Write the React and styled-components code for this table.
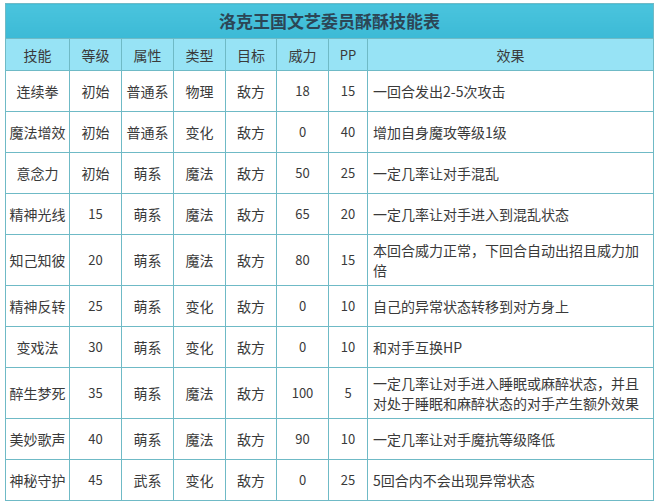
import React from 'react';
import styled, { createGlobalStyle } from 'styled-components';

const GlobalStyle = createGlobalStyle`
  html, body {
    margin: 0;
    padding: 0;
    background: #ffffff;
  }
  body {
    font-family: "Noto Sans CJK SC", "Noto Sans", sans-serif;
  }
`;

const Page = styled.div`
  padding: 3px 0 0 5px;
`;

const Table = styled.table`
  width: 648px;
  border-collapse: collapse;
  table-layout: fixed;
  color: #3a3a3a;
  font-size: 14px;
  line-height: 20px;
`;

const TitleCell = styled.th`
  height: 34px;
  padding: 0;
  background: linear-gradient(to bottom, #4ac4dd 0%, #3cbad6 100%);
  border: 1px solid #6fbac6;
  color: #2c4656;
  font-size: 17px;
  font-weight: 700;
  text-align: center;
`;

const HeadCell = styled.th`
  height: 31px;
  padding: 0;
  background: #97e3f5;
  border: 1px solid #6fbac6;
  font-weight: 400;
  font-size: ${(p) => (p.$small ? '13px' : '14px')};
  text-align: center;
`;

const Row = styled.tr`
  height: ${(p) => (p.$tall ? '51px' : '41px')};
`;

const Cell = styled.td`
  padding: 0 ${(p) => (p.$left ? '5px' : '2px')};
  border: 1px solid #6fbac6;
  text-align: ${(p) => (p.$left ? 'left' : 'center')};
  vertical-align: middle;
  font-size: ${(p) => (p.$num ? '13px' : '14px')};
  line-height: 20px;
  word-break: break-all;
`;

const widths = [64, 52, 52, 52, 51, 52, 39, 286];
const headers = ['技能', '等级', '属性', '类型', '目标', '威力', 'PP', '效果'];

const skills = [
  ['连续拳', '初始', '普通系', '物理', '敌方', '18', '15', '一回合发出2-5次攻击'],
  ['魔法增效', '初始', '普通系', '变化', '敌方', '0', '40', '增加自身魔攻等级1级'],
  ['意念力', '初始', '萌系', '魔法', '敌方', '50', '25', '一定几率让对手混乱'],
  ['精神光线', '15', '萌系', '魔法', '敌方', '65', '20', '一定几率让对手进入到混乱状态'],
  ['知己知彼', '20', '萌系', '魔法', '敌方', '80', '15', '本回合威力正常，下回合自动出招且威力加倍'],
  ['精神反转', '25', '萌系', '变化', '敌方', '0', '10', '自己的异常状态转移到对方身上'],
  ['变戏法', '30', '萌系', '变化', '敌方', '0', '10', '和对手互换HP'],
  ['醉生梦死', '35', '萌系', '魔法', '敌方', '100', '5', '一定几率让对手进入睡眠或麻醉状态，并且对处于睡眠和麻醉状态的对手产生额外效果'],
  ['美妙歌声', '40', '萌系', '魔法', '敌方', '90', '10', '一定几率让对手魔抗等级降低'],
  ['神秘守护', '45', '武系', '变化', '敌方', '0', '25', '5回合内不会出现异常状态'],
];

const isNum = (v) => /^\d+$/.test(v);

export default function App() {
  return (
    <>
      <GlobalStyle />
      <Page>
        <Table>
          <colgroup>
            {widths.map((w, i) => (
              <col key={i} style={{ width: w }} />
            ))}
          </colgroup>
          <thead>
            <tr>
              <TitleCell colSpan={8}>洛克王国文艺委员酥酥技能表</TitleCell>
            </tr>
            <tr>
              {headers.map((h) => (
                <HeadCell key={h} $small={h === 'PP'}>{h}</HeadCell>
              ))}
            </tr>
          </thead>
          <tbody>
            {skills.map((row) => (
              <Row key={row[0]} $tall={row[7].length > 19}>
                {row.map((v, i) => (
                  <Cell key={i} $left={i === 7} $num={i < 7 && isNum(v)}>
                    {v}
                  </Cell>
                ))}
              </Row>
            ))}
          </tbody>
        </Table>
      </Page>
    </>
  );
}
